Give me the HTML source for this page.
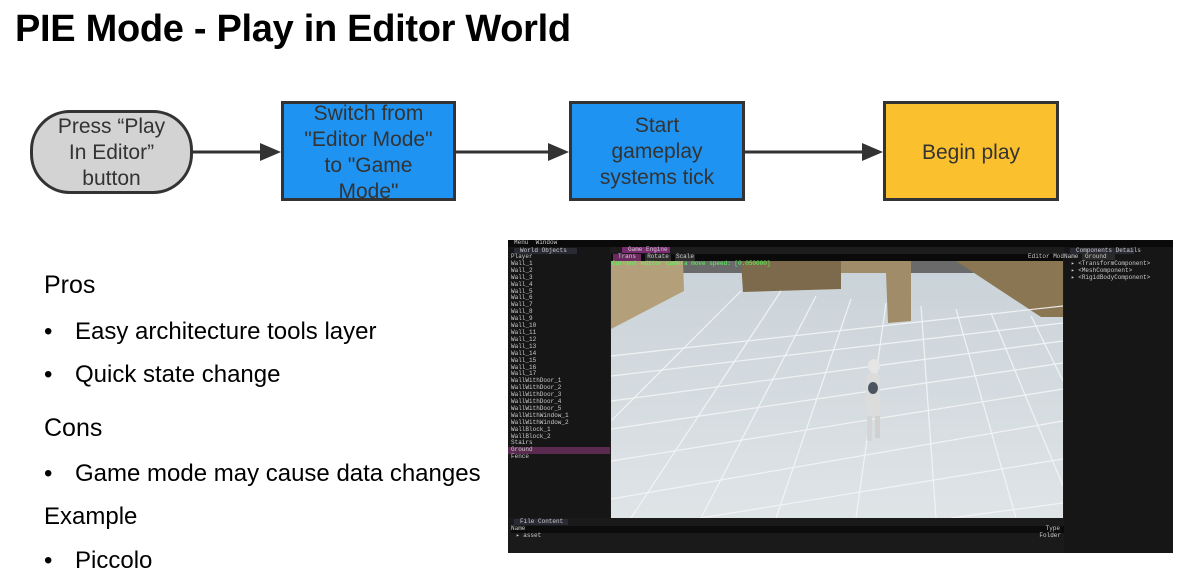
<!DOCTYPE html>
<html><head><meta charset="utf-8"><style>
*{margin:0;padding:0;box-sizing:border-box}
body{width:1185px;height:578px;background:#fff;position:relative;overflow:hidden;font-family:"Liberation Sans",Arial,sans-serif;color:#000}
.a{position:absolute}
h1{position:absolute;left:15px;top:8px;font-size:38px;font-weight:bold;letter-spacing:-0.3px;white-space:nowrap}
.box{position:absolute;border:3px solid #333;display:flex;align-items:center;justify-content:center;text-align:center;font-size:21px;color:#333;line-height:26px;overflow:hidden}
.blue{background:#1e93f2}
.t{position:absolute;font-size:24px;color:#000;white-space:nowrap}
.m{font-family:"Liberation Mono",monospace;font-size:6px;color:#ccc;line-height:6.9px;white-space:nowrap}
</style></head><body>
<h1>PIE Mode - Play in Editor World</h1>
<div class="box" style="left:30px;top:110px;width:163px;height:84px;border-radius:40px;background:#d3d3d3"><div style="margin-top:2px">Press “Play<br>In Editor”<br>button</div></div>
<div class="box blue" style="left:281px;top:101px;width:175px;height:100px"><div style="margin-top:4px">Switch from<br>"Editor Mode"<br>to "Game<br>Mode"</div></div>
<div class="box blue" style="left:569px;top:101px;width:176px;height:100px"><div style="margin-top:2px">Start<br>gameplay<br>systems tick</div></div>
<div class="box" style="left:883px;top:101px;width:176px;height:100px;background:#fbc02d"><div style="margin-top:3px">Begin play</div></div>
<svg class="a" style="left:0;top:0" width="1185" height="230">
<g stroke="#333" stroke-width="3" fill="#333">
<line x1="193" y1="152" x2="262" y2="152"/><polygon points="260,143 281,152 260,161" stroke="none"/>
<line x1="456" y1="152" x2="550" y2="152"/><polygon points="548,143 569,152 548,161" stroke="none"/>
<line x1="745" y1="152" x2="864" y2="152"/><polygon points="862,143 883,152 862,161" stroke="none"/>
</g></svg>
<div class="t" style="left:44px;top:271px;font-size:25px">Pros</div>
<div class="t" style="left:44px;top:318px">•</div><div class="t" style="left:75px;top:318px">Easy architecture tools layer</div>
<div class="t" style="left:44px;top:361px">•</div><div class="t" style="left:75px;top:361px">Quick state change</div>
<div class="t" style="left:44px;top:414px;font-size:25px">Cons</div>
<div class="t" style="left:44px;top:460px">•</div><div class="t" style="left:75px;top:460px">Game mode may cause data changes</div>
<div class="t" style="left:44px;top:503px">Example</div>
<div class="t" style="left:44px;top:547px">•</div><div class="t" style="left:75px;top:547px">Piccolo</div>

<div class="a" style="left:508px;top:240px;width:665px;height:313px;background:#1c1c1c;overflow:hidden">
 <div class="a m" style="left:0;top:0;width:665px;height:7px;background:#0a0a0a;padding-left:6px">Menu&nbsp; Window</div>
 <div class="a" style="left:0;top:7px;width:102px;height:271px;background:#161616">
  <div class="a m" style="left:6px;top:1px;width:63px;height:6px;background:#2a2a35;padding-left:6px">World Objects</div>
  <div class="a m" style="left:3px;top:7px">Player<br>Wall_1<br>Wall_2<br>Wall_3<br>Wall_4<br>Wall_5<br>Wall_6<br>Wall_7<br>Wall_8<br>Wall_9<br>Wall_10<br>Wall_11<br>Wall_12<br>Wall_13<br>Wall_14<br>Wall_15<br>Wall_16<br>Wall_17<br>WallWithDoor_1<br>WallWithDoor_2<br>WallWithDoor_3<br>WallWithDoor_4<br>WallWithDoor_5<br>WallWithWindow_1<br>WallWithWindow_2<br>WallBlock_1<br>WallBlock_2<br>Stairs</div>
  <div class="a m" style="left:0;top:200px;width:102px;height:7px;background:#5a2a50;padding-left:3px">Ground</div>
  <div class="a m" style="left:3px;top:207px">Fence</div>
 </div>
 <div class="a m" style="left:114px;top:7px;width:48px;height:6px;background:#7a2a70;padding-left:6px">Game Engine</div>
 <div class="a" style="left:103px;top:14px;width:452px;height:7px;background:#0a0a0a"></div>
 <div class="a m" style="left:105px;top:14px;width:28px;height:7px;background:#6a2a60;text-align:center">Trans</div>
 <div class="a m" style="left:137px;top:14px;width:26px;height:7px;background:#2a2a2a;text-align:center">Rotate</div>
 <div class="a m" style="left:167px;top:14px;width:20px;height:7px;background:#2a2a2a;text-align:center">Scale</div>
 <div class="a m" style="left:520px;top:14px">Editor Mode</div>
 <svg class="a" style="left:103px;top:21px" width="452" height="257" viewBox="0 0 452 257">
  <defs><linearGradient id="g" x1="0" y1="0" x2="0" y2="1"><stop offset="0" stop-color="#c9d2d8"/><stop offset="1" stop-color="#dfe4e7"/></linearGradient></defs>
  <rect width="452" height="257" fill="url(#g)"/>
  <rect x="60" y="0" width="392" height="12" fill="#6a6a6a"/>
  <polygon points="0,0 72,0 73,30 0,68" fill="#b3a07a"/>
  <polygon points="130,0 230,0 230,28 132,31" fill="#7d6a4c"/>
  <polygon points="230,0 300,0 300,60 277,62 275,12 230,12" fill="#a08c68"/>
  <polygon points="345,0 452,0 452,56 430,56" fill="#8a7652"/>
  <g stroke="#f4f6f7" stroke-width="1.2" fill="none" opacity=".9">
   <line x1="0" y1="95" x2="452" y2="45"/><line x1="0" y1="115" x2="452" y2="62"/><line x1="0" y1="140" x2="452" y2="80"/><line x1="0" y1="168" x2="452" y2="102"/><line x1="0" y1="200" x2="452" y2="128"/><line x1="0" y1="238" x2="452" y2="160"/><line x1="90" y1="257" x2="452" y2="198"/><line x1="340" y1="257" x2="452" y2="242"/>
   <line x1="130" y1="30" x2="0" y2="160"/><line x1="170" y1="30" x2="20" y2="257"/><line x1="205" y1="35" x2="90" y2="257"/><line x1="240" y1="38" x2="165" y2="257"/><line x1="275" y1="42" x2="245" y2="257"/><line x1="310" y1="45" x2="325" y2="257"/><line x1="345" y1="48" x2="405" y2="257"/><line x1="380" y1="52" x2="452" y2="225"/><line x1="420" y1="55" x2="452" y2="120"/>
  </g>
  <ellipse cx="263" cy="105" rx="6" ry="7" fill="#e5e5e5"/>
  <rect x="255" y="112" width="14" height="45" rx="5" fill="#dcdcdc"/>
  <ellipse cx="262" cy="127" rx="5" ry="6" fill="#4a5560"/>
  <rect x="256" y="155" width="5" height="25" fill="#d5d5d5"/>
  <rect x="264" y="155" width="5" height="22" fill="#d0d0d0"/>
 </svg>
 <div class="a m" style="left:104px;top:21px;color:#5f5">Current editor camera move speed: [0.050000]</div>
 <div class="a" style="left:556px;top:7px;width:109px;height:306px;background:#161616">
  <div class="a m" style="left:6px;top:1px;width:64px;height:6px;background:#2a2a35;padding-left:6px">Components Details</div>
  <div class="a m" style="left:0;top:7px">Name <span style="background:#2a2a2a;padding:0 8px 0 3px">Ground</span></div>
  <div class="a m" style="left:7px;top:14px">▸ &lt;TransformComponent&gt;<br>▸ &lt;MeshComponent&gt;<br>▸ &lt;RigidBodyComponent&gt;</div>
 </div>
 <div class="a" style="left:0;top:278px;width:556px;height:35px;background:#1a1a1a">
  <div class="a m" style="left:6px;top:1px;width:54px;height:6px;background:#2a2a35;padding-left:6px">File Content</div>
  <div class="a m" style="left:3px;top:8px;width:553px;background:#0c0c0c">Name<span style="float:right;padding-right:4px">Type</span></div>
  <div class="a m" style="left:8px;top:15px;width:545px">▸ asset<span style="float:right">Folder</span></div>
 </div>
</div>
</body></html>
